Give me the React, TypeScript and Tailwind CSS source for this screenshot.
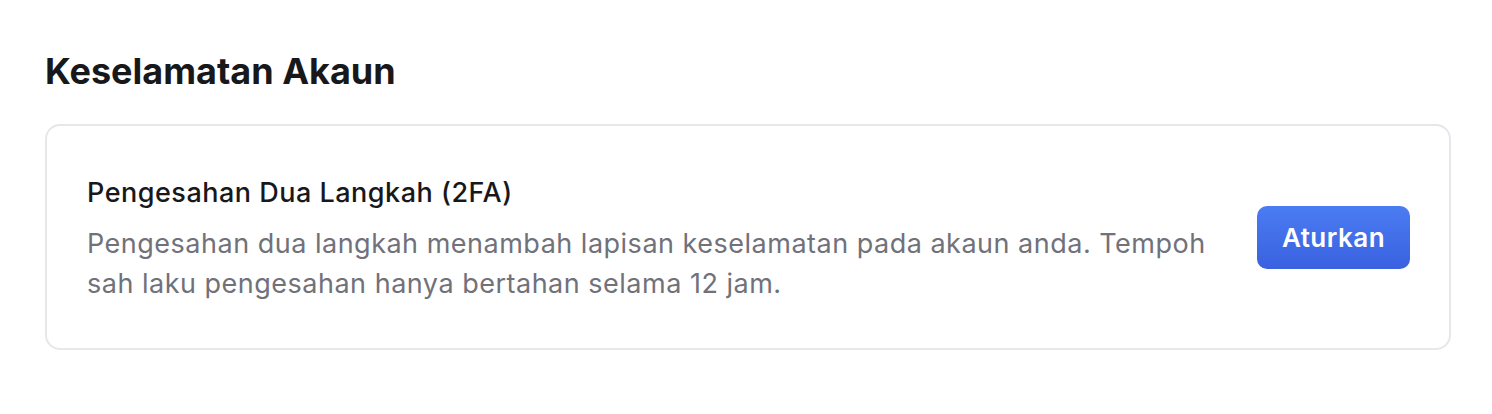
export default function App() {
  return (
    <div className="min-h-screen w-full bg-white px-[45px] pt-[51px]" style={{ fontFamily: "Inter, 'Noto Sans', sans-serif" }}>
      <h1 className="text-[36px] leading-[40px] font-bold text-[#18181b]">Keselamatan Akaun</h1>
      <div className="mt-[33px] w-[1406px] rounded-[15px] border-2 border-[#e5e7eb] bg-white">
        <div className="flex items-center justify-between pl-[40px] pr-[39px] pt-[51px] pb-[44px]">
          <div className="w-[1140px]">
            <div className="text-[27px] leading-[32px] font-medium tracking-[0.5px] text-[#18181b]">Pengesahan Dua Langkah (2FA)</div>
            <p className="mt-[15px] text-[27px] leading-[40px] tracking-[0.5px] text-[#71717a]">
              Pengesahan dua langkah menambah lapisan keselamatan pada akaun anda. Tempoh sah laku pengesahan hanya bertahan selama 12 jam.
            </p>
          </div>
          <button className="-mt-[7px] flex h-[63px] w-[153px] shrink-0 items-center justify-center rounded-[10px] bg-gradient-to-b from-[#4b7cf2] to-[#3a61e0] text-[26px] font-semibold tracking-[0.5px] text-white">
            Aturkan
          </button>
        </div>
      </div>
    </div>
  );
}
